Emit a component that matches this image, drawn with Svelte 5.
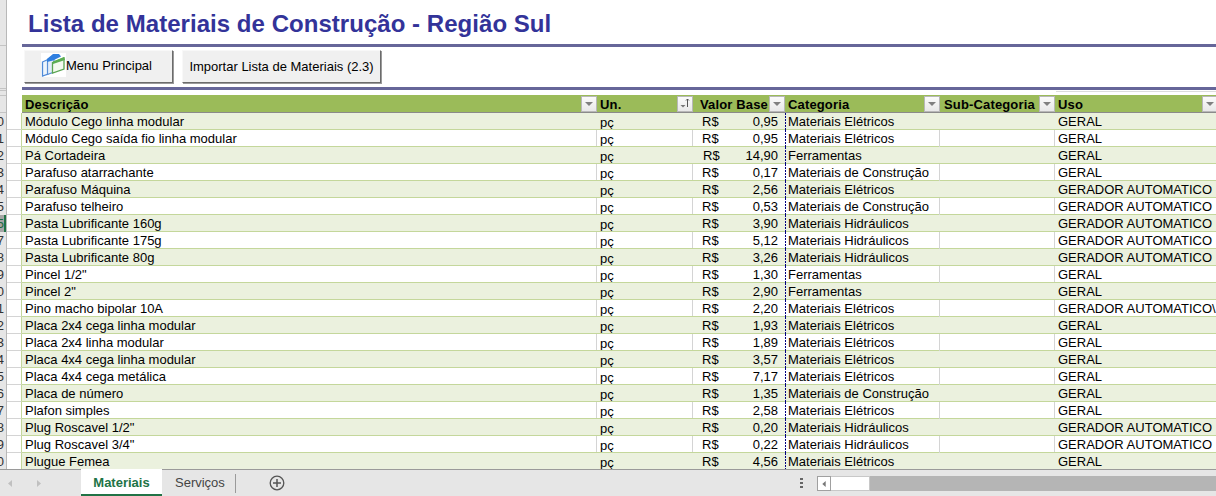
<script>
  const rows = [
    ['0','Módulo Cego linha modular','0,95','Materiais Elétricos','GERAL'],
    ['1','Módulo Cego saída fio linha modular','0,95','Materiais Elétricos','GERAL'],
    ['2','Pá Cortadeira','14,90','Ferramentas','GERAL'],
    ['3','Parafuso atarrachante','0,17','Materiais de Construção','GERAL'],
    ['4','Parafuso Máquina','2,56','Materiais Elétricos','GERADOR AUTOMATICO'],
    ['5','Parafuso telheiro','0,53','Materiais de Construção','GERADOR AUTOMATICO'],
    ['5','Pasta Lubrificante 160g','3,90','Materiais Hidráulicos','GERADOR AUTOMATICO'],
    ['7','Pasta Lubrificante 175g','5,12','Materiais Hidráulicos','GERADOR AUTOMATICO'],
    ['8','Pasta Lubrificante 80g','3,26','Materiais Hidráulicos','GERADOR AUTOMATICO'],
    ['9','Pincel 1/2"','1,30','Ferramentas','GERAL'],
    ['0','Pincel 2"','2,90','Ferramentas','GERAL'],
    ['1','Pino macho bipolar 10A','2,20','Materiais Elétricos','GERADOR AUTOMATICO\\'],
    ['2','Placa 2x4 cega linha modular','1,93','Materiais Elétricos','GERAL'],
    ['3','Placa 2x4 linha modular','1,89','Materiais Elétricos','GERAL'],
    ['4','Placa 4x4 cega linha modular','3,57','Materiais Elétricos','GERAL'],
    ['5','Placa 4x4 cega metálica','7,17','Materiais Elétricos','GERAL'],
    ['6','Placa de número','1,35','Materiais de Construção','GERAL'],
    ['7','Plafon simples','2,58','Materiais Elétricos','GERAL'],
    ['8','Plug Roscavel 1/2"','0,20','Materiais Hidráulicos','GERADOR AUTOMATICO'],
    ['9','Plug Roscavel 3/4"','0,22','Materiais Hidráulicos','GERADOR AUTOMATICO'],
    ['0','Plugue Femea','4,56','Materiais Elétricos','GERAL']
  ];
  const headers = [
    ['Descrição', 'filter'],
    ['Un.', 'sort'],
    ['Valor Base', 'filter'],
    ['Categoria', 'filter'],
    ['Sub-Categoria', 'filter'],
    ['Uso', 'filter']
  ];
</script>

<div class="sheet">
  <div class="main">
    <div class="gutter">
      <div class="gutter-top"></div>
      <div class="gutter-rows">
        {#each rows as r, i}
          <div class="rownum" class:sel={i === 6}>{r[0]}</div>
        {/each}
      </div>
    </div>
    <div class="blank-col">
      <div class="blank-top"></div>
      {#each rows as r}
        <div class="blank-cell"></div>
      {/each}
    </div>
    <div class="content">
      <h1>Lista de Materiais de Construção - Região Sul</h1>
      <div class="rule"></div>
      <div class="buttons">
        <button class="btn menu">
          <svg width="25" height="24" viewBox="0 0 25 24">
            <rect width="25" height="24" fill="#fff" />
            <path d="M1.500 9 L7 6.500 L7 21 L1.500 23 Z" fill="#eef5fc" stroke="#4f8ad8" stroke-width="1.300" />
            <path d="M6.500 6.500 L13 2 L13 19 L6.500 21.500 Z" fill="#e3eefa" stroke="#5a8fd6" stroke-width="1.200" />
            <path d="M6 6 L12 1 L18 1 L20 3.500 L12 7.500 L6 9 Z" fill="#2f7fe0" />
            <path d="M11.500 9.500 L23 5 L23 16 L11.500 20 Z" fill="#f4faf0" stroke="#5aa552" stroke-width="1.300" />
            <path d="M12 8.500 L23 4 L24 7 L12 11 Z" fill="#5cae52" />
          </svg>
          <span>Menu Principal</span>
        </button>
        <button class="btn import">Importar Lista de Materiais (2.3)</button>
      </div>
      <div class="rule second"></div>
      <div class="gap"></div>
      <div class="thead">
        {#each headers as h, i}
          <div class="th c{i}">
            <span class="th-label">{h[0]}</span>
            <span class="fbtn">
              {#if h[1] === 'sort'}
                <svg width="14" height="14" viewBox="0 0 14 14">
                  <path d="M2.500 8h5L5 10.500z" fill="#777" />
                  <path d="M9.500 10V2M8 3.500l1.500-1.500 1.500 1.500" stroke="#555" fill="none" />
                </svg>
              {:else}
                <svg width="14" height="14" viewBox="0 0 14 14"><path d="M3 5h8l-4 4z" fill="#808080" /></svg>
              {/if}
            </span>
          </div>
        {/each}
      </div>
      {#each rows as r, i}
        <div class="tr" class:alt={i % 2 === 0}>
          <div class="td c0">{r[1]}</div>
          <div class="td c1"><span class="un">pç</span></div>
          <div class="td c2" class:wide={r[2] === '14,90'}><span>R$</span><span>{r[2]}</span></div>
          <div class="td c3">{r[3]}</div>
          <div class="td c4"></div>
          <div class="td c5">{r[4]}</div>
        </div>
      {/each}
    </div>
  </div>
  <div class="tabbar">
    <div class="nav">
      <svg width="60" height="27" viewBox="0 0 60 27"><path d="M12 10v7l-4-3.500z" fill="#c0c0c0" /><path d="M37 10v7l4-3.500z" fill="#c0c0c0" /></svg>
    </div>
    <div class="tab active">Materiais</div>
    <div class="tab">Serviços</div>
    <div class="sep"></div>
    <svg class="plus" width="16" height="16" viewBox="0 0 16 16">
      <circle cx="8" cy="8" r="6.800" fill="none" stroke="#555" stroke-width="1.300" />
      <path d="M8 4v8M4 8h8" stroke="#555" stroke-width="1.500" />
    </svg>
    <div class="dots"><i></i><i></i><i></i></div>
    <div class="scroll">
      <div class="sbtn"><svg width="14" height="14" viewBox="0 0 14 14"><path d="M9 3.500v7l-4-3.500z" fill="#777" /></svg></div>
      <div class="thumb"></div>
    </div>
  </div>
</div>

<style>
  :global(body) { margin: 0; background: #fff; }
  .sheet {
    width: 1216px;
    height: 496px;
    overflow: hidden;
    display: flex;
    flex-direction: column;
    font-family: "Liberation Sans", Arial, sans-serif;
    color: #000;
  }
  .main { display: flex; height: 469px; overflow: hidden; }
  .gutter { width: 7px; flex: none; background: #e6e6e6; border-right: 1px solid #b8b8b8; box-sizing: border-box; }
  .gutter-top {
    height: 113px;
    box-sizing: border-box;
    background:
      linear-gradient(#c4c4c4, #c4c4c4) 0 45px / 100% 1px no-repeat,
      linear-gradient(#c4c4c4, #c4c4c4) 0 88px / 100% 1px no-repeat,
      linear-gradient(#c4c4c4, #c4c4c4) 0 90px / 100% 1px no-repeat,
      linear-gradient(#c4c4c4, #c4c4c4) 0 95px / 100% 1px no-repeat;
    border-bottom: 1px solid #c4c4c4;
  }
  .rownum {
    height: 17px;
    line-height: 17px;
    font-size: 13px;
    color: #333;
    text-align: right;
    width: 4px;
    overflow: hidden;
    direction: rtl;
    box-sizing: border-box;
    white-space: nowrap;
  }
  .rownum.sel { background: #a6a6a6; color: #1d6a42; width: 6px; border-right: 2px solid #217346; }
  .blank-col { width: 15px; flex: none; }
  .blank-top { height: 113px; }
  .blank-cell { height: 17px; box-sizing: border-box; border-bottom: 1px solid #d4d4d4; border-right: 1px solid #c4d79b; }
  .content { flex: 1; min-width: 0; overflow: hidden; }
  h1 {
    margin: 0;
    height: 44px;
    padding: 9px 0 0 6px;
    box-sizing: border-box;
    font-size: 24px;
    line-height: 30px;
    font-weight: bold;
    color: #333399;
    letter-spacing: 0.04px;
    white-space: nowrap;
  }
  .rule { height: 3px; background: #666699; }
  .buttons { display: flex; gap: 9px; height: 40px; box-sizing: border-box; padding: 3px 0 0 2px; }
  .btn {
    height: 33px;
    padding: 0;
    background: #f0f0f0;
    border: 1px solid;
    border-color: #f8f8f8 #6b6b6b #6b6b6b #f8f8f8;
    box-shadow: 1px 1px 0 #9a9a9a;
    font: 13px "Liberation Sans", Arial, sans-serif;
    color: #000;
    display: flex;
    align-items: center;
    justify-content: center;
  }
  .menu { width: 149px; justify-content: flex-start; padding-left: 16px; gap: 0; }
  .menu svg { margin-top: -4px; flex: none; }
  .menu span { position: relative; top: -1px; }
  .import { width: 199px; }
  .gap {
    height: 5px;
    background: linear-gradient(#dcdcdc, #dcdcdc) right 1px / 160px 1px no-repeat;
  }
  .thead { display: flex; height: 18px; background: #9bbb59; border-bottom: 1px solid #8a8a8a; box-sizing: border-box; width: 1196px; }
  .th {
    display: flex;
    align-items: center;
    justify-content: space-between;
    box-sizing: border-box;
    font-weight: bold;
    font-size: 13px;
    padding-left: 3px;
    overflow: hidden;
    white-space: nowrap;
    letter-spacing: 0.15px;
  }
  .th-label { position: relative; top: 1px; }
  .fbtn {
    width: 16px;
    height: 16px;
    flex: none;
    background: linear-gradient(#fbfbfb, #e8e8e8);
    border: 1px solid #b8b8b8;
    box-sizing: border-box;
    display: flex;
  }
  .c0 { width: 575px; }
  .c1 { width: 96px; }
  .c2 { width: 92px; }
  .c3 { width: 155px; }
  .c4 { width: 115px; }
  .c5 { width: 163px; }
  .th.c2 { padding-left: 7px; }
  .th.c4 { padding-left: 4px; }
  .tr { display: flex; height: 17px; background: #fff; border-bottom: 1px solid #c4d79b; box-sizing: border-box; width: 1196px; }
  .tr.alt { background: #ebf1de; }
  .td {
    box-sizing: border-box;
    font-size: 13px;
    line-height: 17px;
    padding-left: 3px;
    overflow: hidden;
    white-space: nowrap;
    border-right: 1px solid #d4d4d4;
    height: 16px;
  }
  .tr.alt .td { border-right-color: transparent; }
  .td.c1 .un { position: relative; top: 1px; }
  .td.c2 { display: flex; justify-content: space-between; padding: 0 7px 0 9px; border-right: 0; }
  .td.c2.wide { padding-left: 10px; }
  .td.c3 {
    padding-left: 3px;
    height: 17px;
    background: repeating-linear-gradient(#000080 0 2px, transparent 2px 3px) left / 1px 100% no-repeat;
  }
  .td.c5 { padding-left: 3px; border-right: 0; }
  .tabbar {
    height: 27px;
    flex: none;
    background: #e6e6e6;
    border-top: 1px solid #9a9a9a;
    box-sizing: border-box;
    display: flex;
    align-items: stretch;
    font-size: 13px;
  }
  .nav { width: 81px; flex: none; }
  .tab { padding: 0 12px 0 13px; line-height: 25px; color: #444; width: 73px; box-sizing: border-box; flex: none; }
  .tab.active {
    width: 81px;
    padding: 0;
    box-sizing: border-box;
    text-align: center;
    background: #fff;
    color: #217346;
    font-weight: bold;
    border-bottom: 2px solid #217346;
    margin-top: -1px;
    line-height: 27px;
  }
  .sep { width: 1px; flex: none; background: #9a9a9a; margin: 4px 0 3px; }
  .plus { margin: 5px 0 0 33px; flex: none; }
  .dots { display: flex; flex-direction: column; gap: 2px; margin: 8px 0 0 515px; width: 3px; flex: none; }
  .dots i { display: block; width: 3px; height: 2px; background: #666; }
  .scroll { margin: 6px 0 0 14px; flex: 1; height: 15px; background: #b5b5b5; display: flex; }
  .sbtn { width: 14px; height: 15px; background: #fff; border: 1px solid #a0a0a0; box-sizing: border-box; display: flex; }
  .thumb { width: 39px; height: 15px; background: #fff; border: 1px solid #c8c8c8; box-sizing: border-box; border-left: 0; }
</style>
